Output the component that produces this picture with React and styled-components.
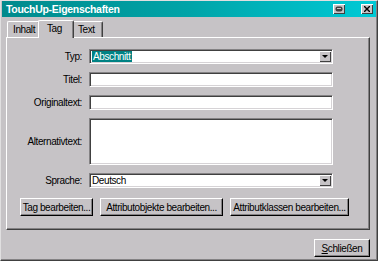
import React from "react";
import styled, { createGlobalStyle } from "styled-components";

const Global = createGlobalStyle`
  html, body { margin: 0; padding: 0; background: #c6c3c6; }
  body { font-family: "Liberation Sans", Arial, sans-serif; font-size: 10px; color: #000; }
`;

const Window = styled.div`
  width: 378px;
  height: 261px;
  box-sizing: border-box;
  background: #c6c3c6;
  border-top: 1px solid #e0dfe0;
  border-left: 1px solid #e0dfe0;
  border-right: 1px solid #404040;
  border-bottom: 1px solid #404040;
  box-shadow: inset -1px -1px 0 #848284;
  display: flex;
  flex-direction: column;
  font-family: "Liberation Sans", Arial, sans-serif;
  font-size: 10px;
  letter-spacing: -0.4px;
`;

const TitleBar = styled.div`
  height: 16px;
  margin: 0 1px;
  background: linear-gradient(to right, #008a8c 0%, #00a4a8 50%, #00cad6 100%);
  display: flex;
  align-items: center;
  padding: 0 3px 0 4px;
  color: #fff;
  font-weight: bold;
  font-size: 10.5px;
`;

const Title = styled.span`
  flex: 1;
  letter-spacing: -0.3px;
`;

const CaptionButton = styled.div`
  width: 12px;
  height: 10px;
  margin-left: ${p => p.$gap || 0}px;
  background: #c6c3c6;
  box-shadow: inset 1px 1px 0 #fff, inset -1px -1px 0 #404040;
  display: flex;
  align-items: center;
  justify-content: center;
`;

const Body = styled.div`
  flex: 1;
  display: flex;
  flex-direction: column;
  padding: 3px 7px 0 5px;
`;

const TabRow = styled.div`
  display: flex;
  align-items: flex-end;
  height: 17px;
  padding-left: 1px;
  position: relative;
  z-index: 1;
`;

const Tab = styled.div`
  box-sizing: border-box;
  height: ${p => (p.$active ? 18 : 16)}px;
  width: ${p => p.$w}px;
  padding-top: 2px;
  padding-left: ${p => (p.$active ? 8 : 5)}px;
  margin: ${p => (p.$active ? "0 -2px -1px -2px" : "0")};
  background: #c6c3c6;
  border-top: 1px solid #fff;
  border-left: 1px solid #fff;
  border-right: 1px solid #404040;
  box-shadow: inset -1px 0 0 #848284;
  border-radius: 2px 2px 0 0;
  z-index: ${p => (p.$active ? 2 : 1)};
`;

const Panel = styled.div`
  box-sizing: border-box;
  height: 193px;
  border-top: 1px solid #fff;
  border-left: 1px solid #fff;
  border-right: 1px solid #404040;
  border-bottom: 1px solid #404040;
  box-shadow: inset -1px -1px 0 #848284;
  padding: 11px 0 0 0;
  display: flex;
  flex-direction: column;
`;

const Form = styled.div`
  display: grid;
  grid-template-columns: 75px 244px;
  column-gap: 7px;
  row-gap: 8px;
  align-items: center;
`;

const Label = styled.label`
  text-align: right;
`;

const Field = styled.div`
  box-sizing: border-box;
  height: ${p => p.$h || 15}px;
  background: #fff;
  border-top: 1px solid #848284;
  border-left: 1px solid #848284;
  border-right: 1px solid #fff;
  border-bottom: 1px solid #fff;
  box-shadow: inset 1px 1px 0 #404040, inset -1px -1px 0 #d6d3d6;
  display: flex;
  align-items: center;
  padding: 0 2px 0 2px;
`;

const ComboText = styled.span`
  flex: 1;
`;

const Selected = styled.span`
  background: #008284;
  color: #fff;
  padding: 0 1px;
`;

const DropButton = styled.div`
  width: 12px;
  height: 11px;
  background: #c6c3c6;
  box-shadow: inset 1px 1px 0 #fff, inset -1px -1px 0 #404040;
  display: flex;
  align-items: center;
  justify-content: center;
  margin-right: -1px;
`;

const Arrow = styled.div`
  width: 0;
  height: 0;
  border-left: 3px solid transparent;
  border-right: 3px solid transparent;
  border-top: 3px solid #000;
`;

const ButtonRow = styled.div`
  display: flex;
  gap: 7px;
  padding: 10px 0 0 13px;
`;

const Button = styled.div`
  box-sizing: border-box;
  height: 18px;
  background: #c6c3c6;
  border-top: 1px solid #fff;
  border-left: 1px solid #fff;
  border-right: 1px solid #000;
  border-bottom: 1px solid #000;
  box-shadow: inset -1px -1px 0 #848284;
  display: flex;
  align-items: center;
  justify-content: center;
  white-space: nowrap;
  width: ${p => p.$w}px;
`;

const Footer = styled.div`
  display: flex;
  justify-content: flex-end;
  padding: 9px 0 0 0;
`;

const Combo = ({ children }) => (
  <Field>
    <ComboText>{children}</ComboText>
    <DropButton><Arrow /></DropButton>
  </Field>
);

export default function App() {
  return (
    <>
      <Global />
      <Window>
        <TitleBar>
          <Title>TouchUp-Eigenschaften</Title>
          <CaptionButton>
            <svg width="8" height="6" viewBox="0 0 8 6">
              <rect x="0.5" y="0.5" width="7" height="5" rx="2" fill="#404040" />
              <rect x="2" y="2" width="4" height="1" fill="#c6c3c6" />
            </svg>
          </CaptionButton>
          <CaptionButton $gap={16}>
            <svg width="6" height="6" viewBox="0 0 6 6">
              <path d="M0 0 L6 6 M6 0 L0 6" stroke="#000" strokeWidth="1.4" />
            </svg>
          </CaptionButton>
        </TitleBar>
        <Body>
          <TabRow>
            <Tab $w={33}>Inhalt</Tab>
            <Tab $w={36} $active>Tag</Tab>
            <Tab $w={31}>Text</Tab>
          </TabRow>
          <Panel>
            <Form>
              <Label>Typ:</Label>
              <Combo><Selected>Abschnitt</Selected></Combo>
              <Label>Titel:</Label>
              <Field />
              <Label>Originaltext:</Label>
              <Field />
              <Label>Alternativtext:</Label>
              <Field $h={47} />
              <Label>Sprache:</Label>
              <Combo>Deutsch</Combo>
            </Form>
            <ButtonRow>
              <Button $w={73}>Tag bearbeiten...</Button>
              <Button $w={123}>Attributobjekte bearbeiten...</Button>
              <Button $w={119}>Attributklassen bearbeiten...</Button>
            </ButtonRow>
          </Panel>
          <Footer>
            <Button $w={56}><span><u>S</u>chließen</span></Button>
          </Footer>
        </Body>
      </Window>
    </>
  );
}
